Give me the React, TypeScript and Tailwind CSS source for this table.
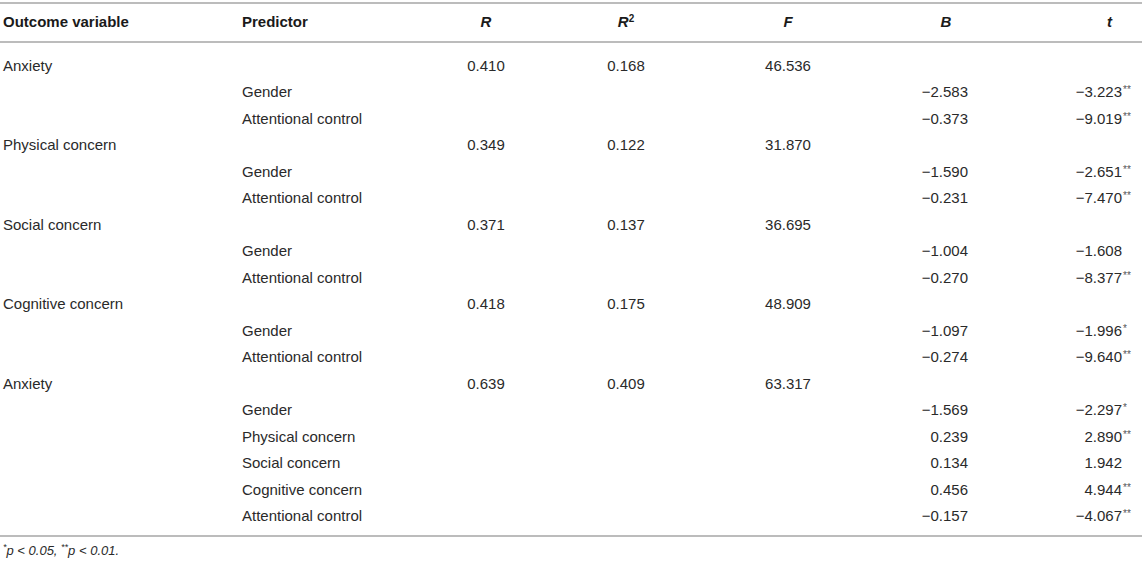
const rows: [string, string, string, string, string, string, string, string][] = [
  ['Anxiety', '', '0.410', '0.168', '46.536', '', '', ''],
  ['', 'Gender', '', '', '', '−2.583', '−3.223', '**'],
  ['', 'Attentional control', '', '', '', '−0.373', '−9.019', '**'],
  ['Physical concern', '', '0.349', '0.122', '31.870', '', '', ''],
  ['', 'Gender', '', '', '', '−1.590', '−2.651', '**'],
  ['', 'Attentional control', '', '', '', '−0.231', '−7.470', '**'],
  ['Social concern', '', '0.371', '0.137', '36.695', '', '', ''],
  ['', 'Gender', '', '', '', '−1.004', '−1.608', ''],
  ['', 'Attentional control', '', '', '', '−0.270', '−8.377', '**'],
  ['Cognitive concern', '', '0.418', '0.175', '48.909', '', '', ''],
  ['', 'Gender', '', '', '', '−1.097', '−1.996', '*'],
  ['', 'Attentional control', '', '', '', '−0.274', '−9.640', '**'],
  ['Anxiety', '', '0.639', '0.409', '63.317', '', '', ''],
  ['', 'Gender', '', '', '', '−1.569', '−2.297', '*'],
  ['', 'Physical concern', '', '', '', '0.239', '2.890', '**'],
  ['', 'Social concern', '', '', '', '0.134', '1.942', ''],
  ['', 'Cognitive concern', '', '', '', '0.456', '4.944', '**'],
  ['', 'Attentional control', '', '', '', '−0.157', '−4.067', '**'],
]

const grid = 'grid grid-cols-[242px_178px_132px_148px_176px_140px_106px_20px]'

export default function App() {
  return (
    <div className="w-[1142px] h-[563px] bg-white text-[#2a2a2a] text-[15px] font-['Liberation_Sans',Arial,sans-serif]">
      <div className="h-[2px]" />
      {/* Header */}
      <div className={`${grid} h-[41px] items-center border-y-2 border-[#bcbcbc] font-bold text-[#1a1a1a]`}>
        <div className="pl-[3px]">Outcome variable</div>
        <div>Predictor</div>
        <div className="text-center italic">R</div>
        <div className="text-center">
          <span className="italic">R</span>
          <sup className="text-[10px]">2</sup>
        </div>
        <div className="text-center italic">F</div>
        <div className="text-center italic">B</div>
        <div className="col-span-2 text-right pr-[30px] italic">t</div>
      </div>

      {/* Body */}
      <div className="pt-[9.5px] pb-[5px] border-b-2 border-[#bcbcbc]">
        {rows.map((r, i) => (
          <div key={i} className={`${grid} h-[26.5px] items-center`}>
            <div className="pl-[3px]">{r[0]}</div>
            <div>{r[1]}</div>
            <div className="text-center">{r[2]}</div>
            <div className="text-center">{r[3]}</div>
            <div className="text-center">{r[4]}</div>
            <div className="text-right pr-[48px]">{r[5]}</div>
            <div className="text-right">{r[6]}</div>
            <div className="self-start pt-[6px] pl-[1px] text-[10px] leading-[10px] text-[#555]">{r[7]}</div>
          </div>
        ))}
      </div>

      {/* Footnote */}
      <div className="pl-[3px] pt-[4px] text-[13px] italic">
        <sup className="text-[9px]">*</sup>p &lt; 0.05, <sup className="text-[9px]">**</sup>p &lt; 0.01.
      </div>
    </div>
  )
}
